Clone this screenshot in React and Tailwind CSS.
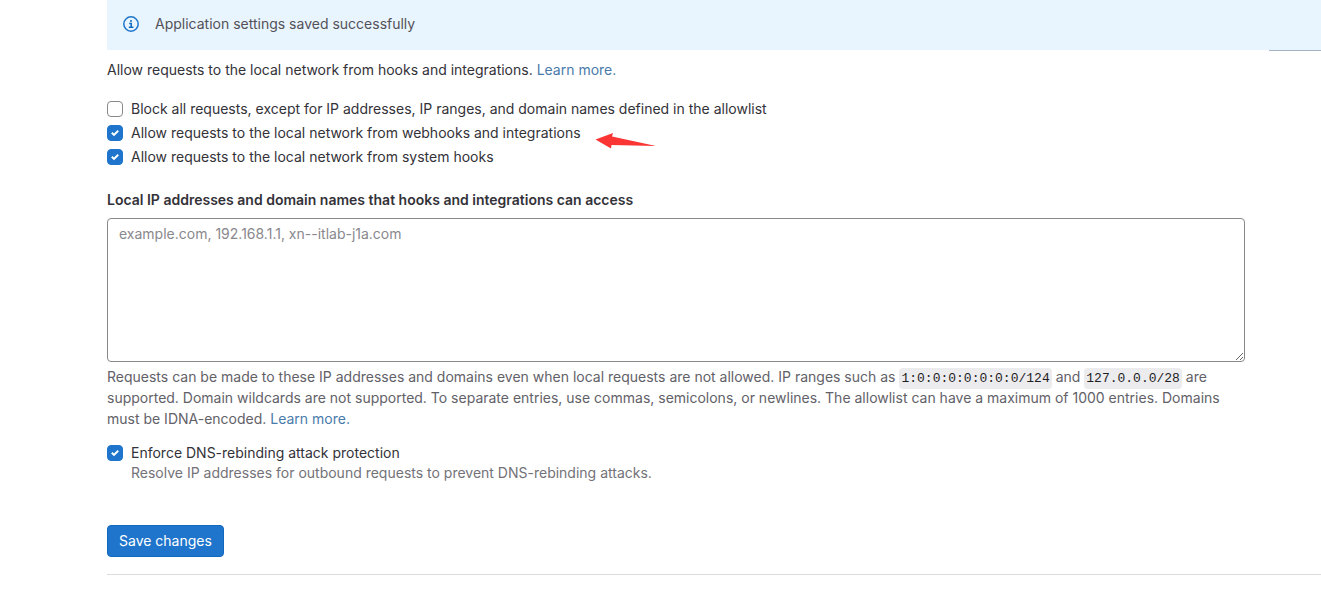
import React, { useId, useState } from 'react';

function InfoIcon() {
  return (
    <svg className="size-4 shrink-0" viewBox="0 0 16 16" fill="none" aria-hidden="true">
      <circle cx="8" cy="8" r="7.2" stroke="#1f75cb" strokeWidth="1.5" />
      <circle cx="8" cy="4.9" r="1" fill="#1068bf" />
      <path d="M6.2 7.5H8.2V11.2M5.8 11.3H10.4" stroke="#1068bf" strokeWidth="1.5" />
    </svg>
  );
}

function Checkbox({ label, help, initial = false }) {
  const id = useId();
  const [checked, setChecked] = useState(initial);
  return (
    <div className="flex items-start gap-2">
      <span className="grid size-4 shrink-0">
        <input
          id={id}
          type="checkbox"
          checked={checked}
          onChange={(e) => setChecked(e.target.checked)}
          className="peer col-start-1 row-start-1 size-4 appearance-none rounded border border-[#89888d] bg-white checked:border-[#1f75cb] checked:bg-[#1f75cb]"
        />
        <svg
          className="pointer-events-none invisible col-start-1 row-start-1 size-4 peer-checked:visible"
          viewBox="0 0 16 16"
          fill="none"
          aria-hidden="true"
        >
          <path d="M4.8 7.8L7 9.9L11.2 5.7" stroke="#fff" strokeWidth="2" />
        </svg>
      </span>
      <div>
        <label htmlFor={id} className="block leading-4">{label}</label>
        {help && <p className="leading-6 text-[#737278]">{help}</p>}
      </div>
    </div>
  );
}

function Code({ children }) {
  return (
    <code className="rounded bg-[#ececef] px-0.5 py-[3px] font-['Liberation_Mono',monospace] text-[13px] leading-4 text-[#1f1e24]">
      {children}
    </code>
  );
}

export default function App() {
  return (
    <main className="min-h-screen bg-white pl-[107px] font-['Inter','Liberation_Sans',sans-serif] text-sm text-[#333238]">
      <div role="status" className="flex h-[50px] items-center gap-4 bg-[#e9f5fe] px-4 pb-0.5 text-[#535158]">
        <InfoIcon />
        <p>Application settings saved successfully</p>
      </div>
      <div className="ml-auto w-[52px] border-t border-[#a5b4c4]" />

      <form onSubmit={(e) => e.preventDefault()}>
        <div className="pr-[76px]">
          <p className="mt-[9px] leading-5">
            Allow requests to the local network from hooks and integrations.{' '}
            <a href="#learn-requests" className="text-[#4a7bab]">Learn more.</a>
          </p>

          <div className="mt-[21px] flex flex-col gap-2">
            <Checkbox label="Block all requests, except for IP addresses, IP ranges, and domain names defined in the allowlist" />
            <div className="relative w-fit">
              <Checkbox label="Allow requests to the local network from webhooks and integrations" initial />
              <svg className="absolute top-2 left-full ml-3.5 h-4 w-[61px]" viewBox="0 0 61 16" aria-hidden="true">
                <path d="M0.5 6.5L18 0L17 3.5L61 13L16.5 12L16 15.5Z" fill="#fb3434" />
              </svg>
            </div>
            <Checkbox label="Allow requests to the local network from system hooks" initial />
          </div>

          <label htmlFor="allowlist" className="mt-[25px] block font-semibold leading-5">
            Local IP addresses and domain names that hooks and integrations can access
          </label>
          <textarea
            id="allowlist"
            placeholder="example.com, 192.168.1.1, xn--itlab-j1a.com"
            className="mt-2 block h-36 w-full resize rounded border border-[#89888d] bg-white px-[11px] py-[5px] leading-5 placeholder:text-[#89888d]"
          />
          <p className="mt-1 leading-[21px] text-[#626168]">
            Requests can be made to these IP addresses and domains even when local requests are not allowed. IP ranges such as{' '}
            <Code>1:0:0:0:0:0:0:0/124</Code> and <Code>127.0.0.0/28</Code> are supported. Domain wildcards are not supported. To
            separate entries, use commas, semicolons, or newlines. The allowlist can have a maximum of 1000 entries. Domains must be
            IDNA-encoded.{' '}
            <a href="#learn-allowlist" className="text-[#4a7bab]">Learn more.</a>
          </p>

          <div className="mt-4">
            <Checkbox
              label="Enforce DNS-rebinding attack protection"
              help="Resolve IP addresses for outbound requests to prevent DNS-rebinding attacks."
              initial
            />
          </div>

          <button
            type="submit"
            className="mt-10 block h-8 rounded border border-[#1068bf] bg-[#1f75cb] px-[11px] text-white"
          >
            Save changes
          </button>
        </div>
      </form>
      <hr className="mt-[17px] border-[#dcdcde]" />
    </main>
  );
}
